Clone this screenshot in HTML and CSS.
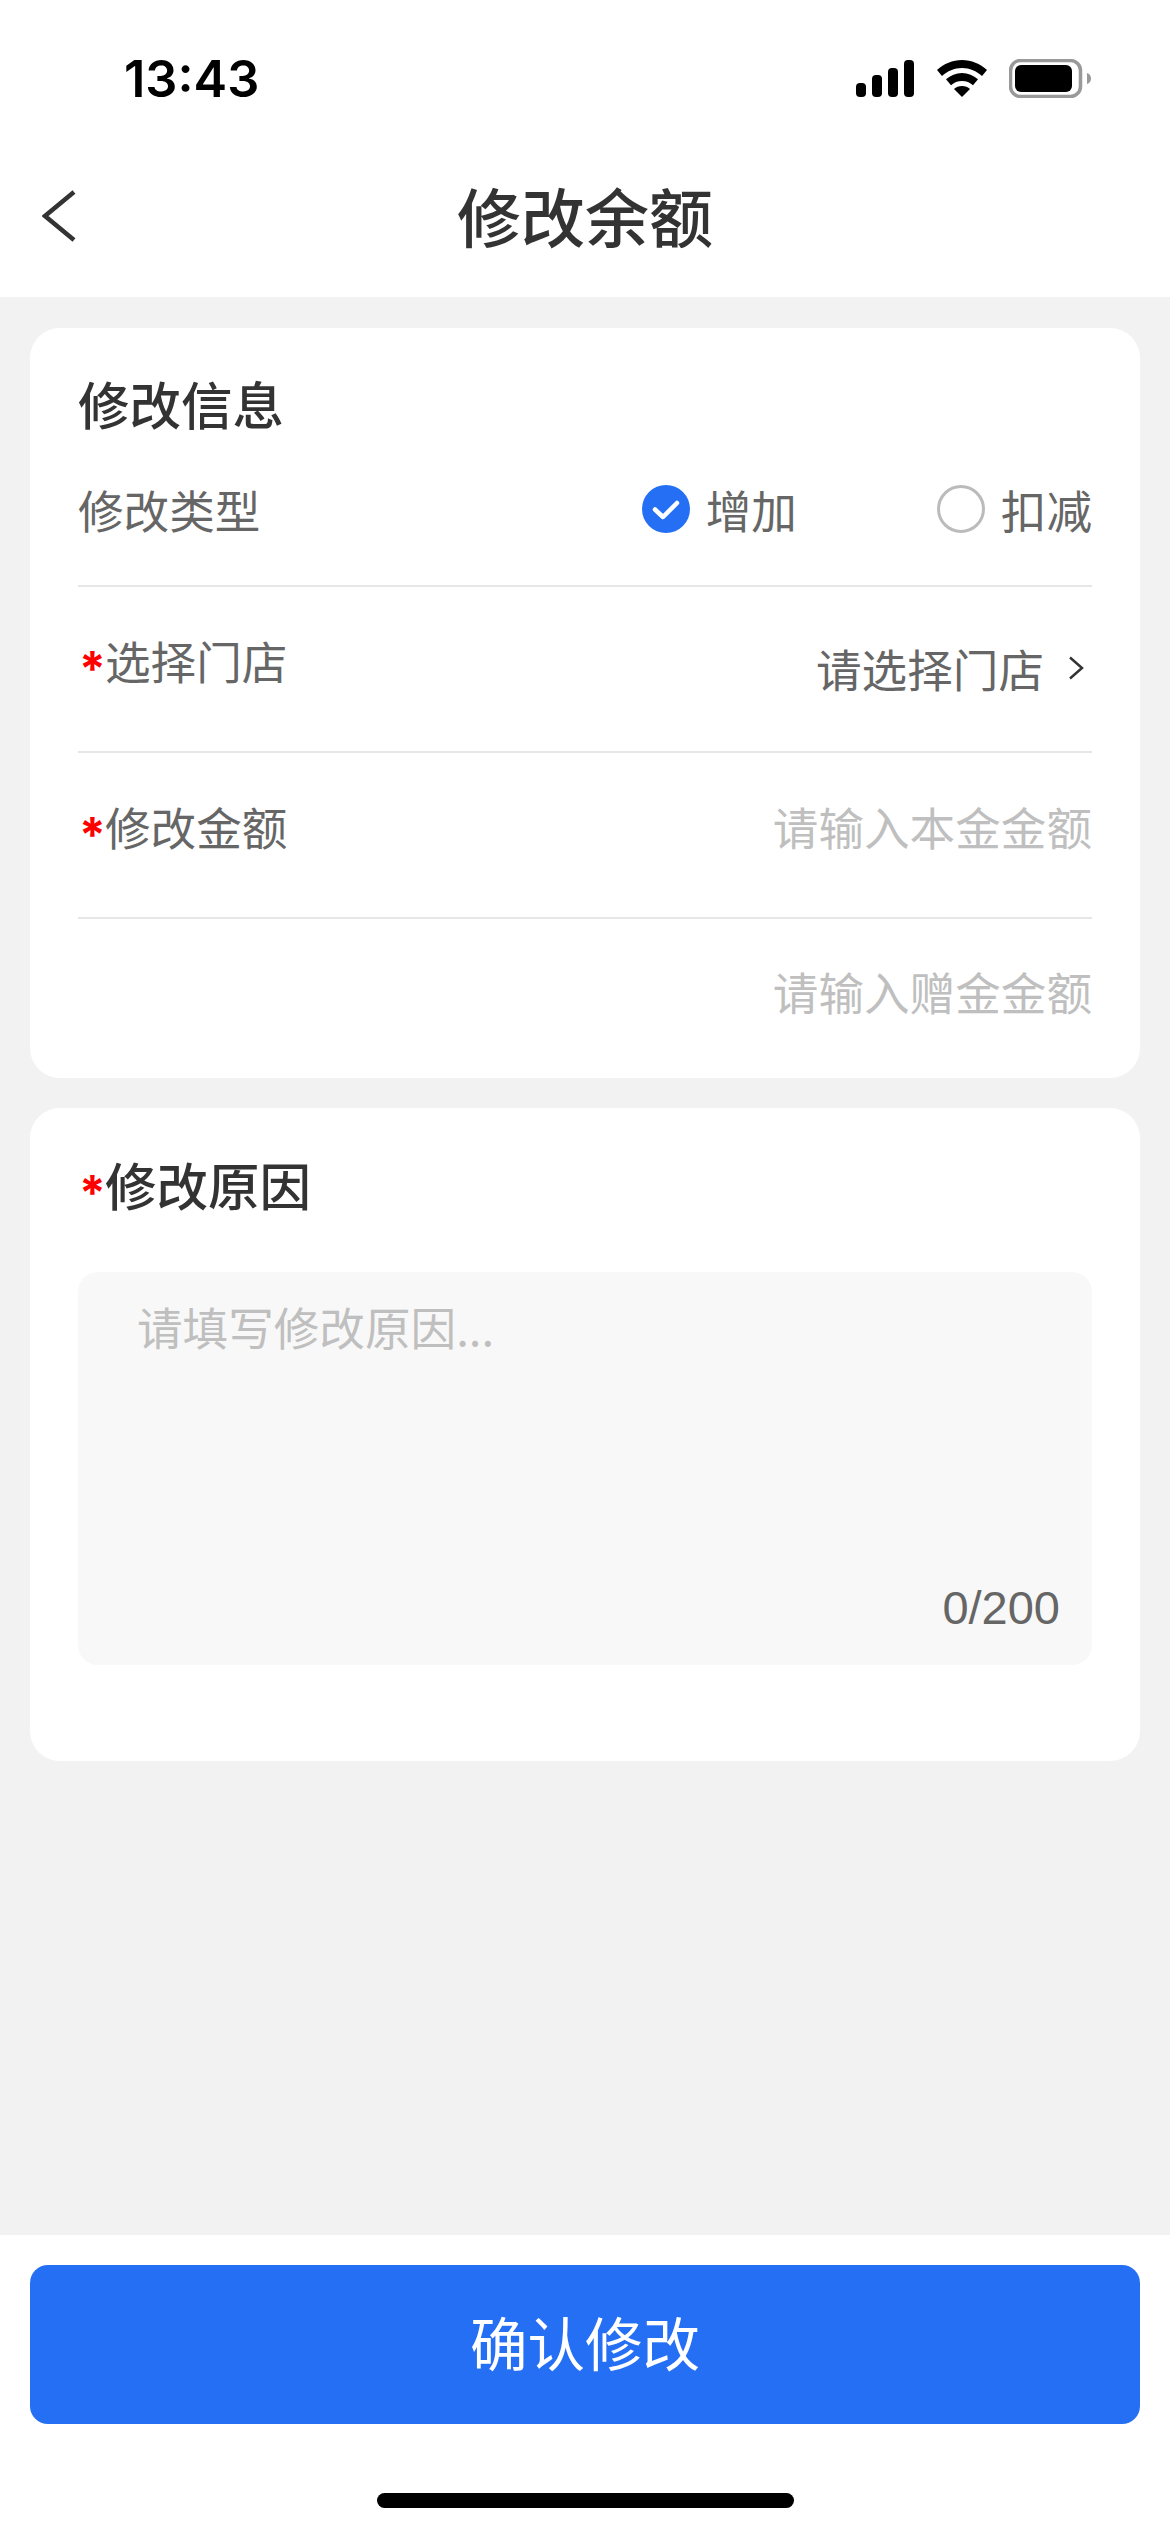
FILE: index.html
```html
<!DOCTYPE html>
<html lang="zh-CN">
<head>
<meta charset="utf-8">
<title>修改余额</title>
<link rel="stylesheet" href="styles.css">
</head>
<body>
<div class="page">
  <header class="top">
    <div class="status">
      <span class="time">13:43</span>
      <div class="status-icons">
        <svg class="signal" width="58" height="37" viewBox="0 0 58 37"><rect x="0" y="23" width="10" height="14" rx="4" /><rect x="16" y="15" width="10" height="22" rx="4"/><rect x="32" y="8" width="10" height="29" rx="4"/><rect x="48" y="0" width="10" height="37" rx="4"/></svg>
        <svg class="wifi" width="50" height="37" viewBox="0 0 50 37"><path d="M25 0C15.500 0 7 3.800 0 10l5 6c5.500-5 12.300-8 20-8s14.500 3 20 8l5-6C43 3.800 34.500 0 25 0z"/><path d="M25 13c-6 0-11.500 2.300-16 6.300l5 6c3-2.800 6.800-4.300 11-4.300s8 1.500 11 4.300l5-6C36.500 15.300 31 13 25 13z"/><path d="M25 26c-3.200 0-6 1.200-8 3l8 8 8-8c-2-1.800-4.800-3-8-3z"/></svg>
        <svg class="battery" width="82" height="39" viewBox="0 0 82 39"><rect x="1.500" y="1.500" width="70" height="36" rx="10" fill="none" stroke="#999" stroke-width="3.500"/><rect x="6" y="6" width="57" height="27" rx="6" fill="#000"/><path d="M78 14c2.500.8 4 2.800 4 5.500s-1.500 4.700-4 5.500z" fill="#999"/></svg>
      </div>
    </div>
    <nav class="nav">
      <svg class="back" width="34" height="52" viewBox="0 0 34 52"><path d="M32 2 3 26l29 24" fill="none" stroke="#333" stroke-width="4.500"/></svg>
      <h1 class="nav-title">修改余额</h1>
    </nav>
  </header>

  <main class="content">
    <section class="card">
      <h2 class="card-title">修改信息</h2>
      <div class="row row-type">
        <span class="label">修改类型</span>
        <div class="options">
          <span class="option option-on">
            <svg width="48" height="48" viewBox="0 0 48 48"><circle cx="24" cy="24" r="24" fill="#256ff5"/><path d="M13 24.500l8 7.500 14-14" fill="none" stroke="#fff" stroke-width="4.500" stroke-linecap="round" stroke-linejoin="round"/></svg>
            增加
          </span>
          <span class="option">
            <span class="radio"></span>
            扣减
          </span>
        </div>
      </div>
      <div class="row">
        <span class="label"><i class="req">*</i>选择门店</span>
        <span class="value">请选择门店<svg class="chev" width="16" height="24" viewBox="0 0 16 24"><path d="M2 1.500 14 12 2 22.500" fill="none" stroke="#333" stroke-width="2.500"/></svg></span>
      </div>
      <div class="row">
        <span class="label"><i class="req">*</i>修改金额</span>
        <span class="ph">请输入本金金额</span>
      </div>
      <div class="row row-last">
        <span class="ph">请输入赠金金额</span>
      </div>
    </section>

    <section class="card card-reason">
      <h2 class="card-title reason-title"><i class="req">*</i>修改原因</h2>
      <div class="textarea">
        <span class="ph">请填写修改原因...</span>
        <span class="count">0/200</span>
      </div>
    </section>
  </main>

  <footer class="foot">
    <button class="submit" type="button">确认修改</button>
    <div class="home"></div>
  </footer>
</div>
</body>
</html>
```
FILE: styles.css
```css
* { box-sizing: border-box; }
html, body { margin: 0; padding: 0; }
body { font-family: "Noto Sans CJK SC", "Noto Sans", sans-serif; color: #333; }
.page { width: 1170px; height: 2532px; display: flex; flex-direction: column; background: #f2f2f2; }

.top { background: #fff; height: 297px; flex: none; }
.status { height: 140px; padding: 16px 79px 0 124px; display: flex; justify-content: space-between; align-items: center; }
.time { font-family: Inter, sans-serif; font-weight: 600; font-size: 50.500px; color: #000; }
.status-icons { display: flex; align-items: center; gap: 22px; }
.signal, .wifi { fill: #000; display: block; }
.signal { margin-right: 1px; }
.battery { display: block; }

.nav { height: 157px; padding-bottom: 10px; display: flex; align-items: center; justify-content: center; position: relative; }
.back { position: absolute; left: 42px; top: 50%; margin-top: -29px; }
.nav-title { margin: 0; font-size: 64px; font-weight: 500; line-height: 80px; color: #333; }

.content { flex: 1; padding: 31px 30px 0; display: flex; flex-direction: column; gap: 30px; }
.card { background: #fff; border-radius: 30px; padding: 45px 48px 0; }
.card-title { margin: 0 0 3px; font-size: 51.500px; line-height: 60px; font-weight: 500; color: #333; }

.row { height: 166px; display: flex; justify-content: space-between; align-items: flex-start; padding-top: 43px; border-bottom: 2px solid #e6e6e6; font-size: 45.600px; line-height: 60px; color: #666; }
.row-type { height: 151px; padding: 0 0 4px; align-items: center; }
.row-last { height: 159px; border-bottom: 0; padding-top: 42px; justify-content: flex-end; }
.label { color: #666; display: flex; }
.req { font-style: normal; color: #f00; font-family: Inter, sans-serif; font-weight: 700; display: block; width: 27px; height: 60px; padding-top: 9px; padding-left: 1px; font-size: 48px; line-height: 60px; }

.options { display: flex; align-items: center; gap: 140px; }
.option { display: flex; align-items: center; gap: 16px; color: #666; }
.option svg { display: block; }
.radio { width: 48px; height: 48px; border-radius: 50%; border: 3px solid #bbb; display: block; }

.value { display: flex; align-items: center; margin-top: 8px; color: #666; }
.chev { display: block; margin: 0 8px 0 24px; }
.ph { color: #bfbfbf; }

.card-reason { padding-top: 46px; padding-bottom: 96px; }
.reason-title { display: flex; }
.textarea { margin-top: 58px; height: 393px; background: #f8f8f8; border-radius: 20px; padding: 24px 32px 27px 59px; display: flex; flex-direction: column; justify-content: space-between; font-size: 45.600px; line-height: 60px; }
.count { align-self: flex-end; color: #666; font-family: "Liberation Sans", sans-serif; font-size: 47px; }

.foot { flex: none; height: 297px; background: #fff; padding: 30px 30px 0; display: flex; flex-direction: column; align-items: center; }
.submit { width: 1110px; height: 159px; border: 0; border-radius: 18px; background: #256ff5; color: #fff; font-family: inherit; font-size: 57.500px; font-weight: 400; padding: 0 0 8px; }
.home { width: 417px; height: 15px; border-radius: 8px; background: #000; margin-top: 69px; }
```
